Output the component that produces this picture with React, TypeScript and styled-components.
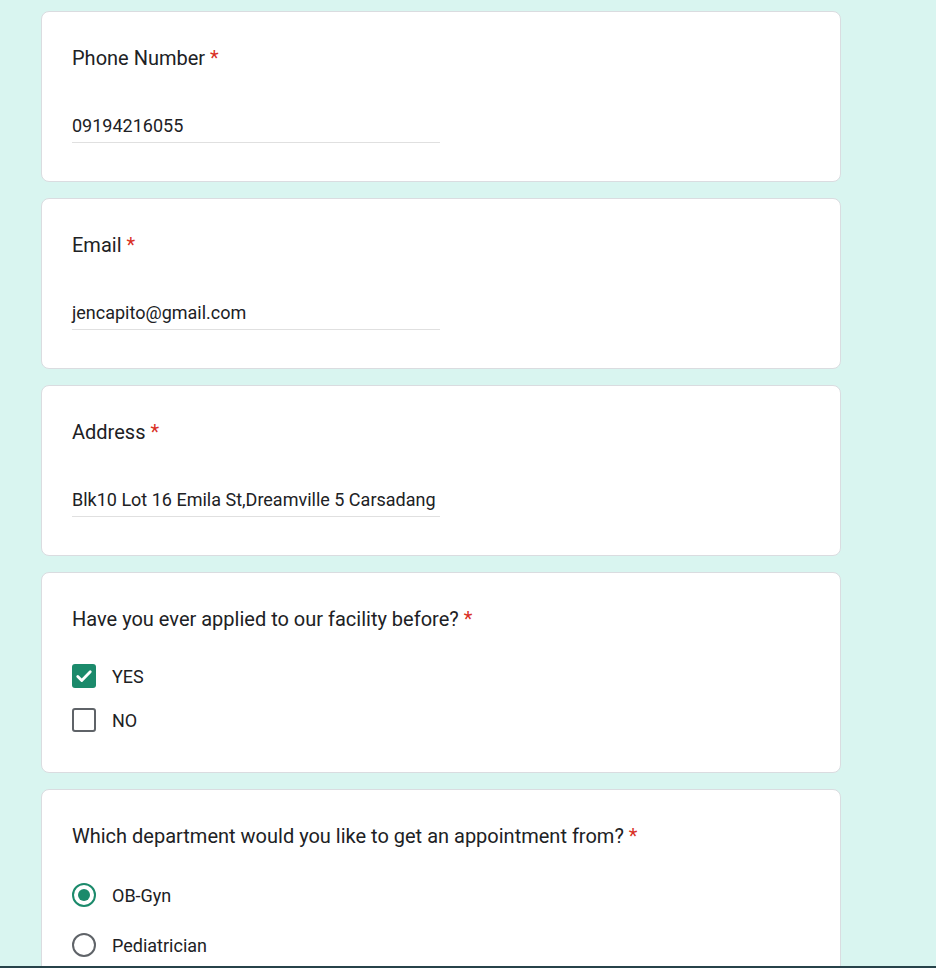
import React from "react"
import styled, { createGlobalStyle } from "styled-components"

const GlobalStyle = createGlobalStyle`
  html, body {
    margin: 0;
    padding: 0;
    background: #d9f5f0;
  }
  body {
    font-family: Roboto, "Liberation Sans", Arial, sans-serif;
    color: #202124;
  }
`

const ACCENT = "#1b8a6b"

const Screen = styled.div`
  height: 968px;
  display: grid;
  grid-template-rows: 1fr 2px;
  overflow: hidden;
`

const Column = styled.div`
  display: flex;
  flex-direction: column;
  gap: 16px;
  width: 800px;
  padding: 11px 0 0 41px;
  overflow: hidden;
`

const Card = styled.section`
  flex-shrink: 0;
  background: #fff;
  border: 1px solid #dadce0;
  border-radius: 8px;
  padding: 34px 30px 30px;
`

const Label = styled.div`
  font-size: 20px;
  line-height: 24px;
  letter-spacing: 0;
`

const Required = styled.span`
  color: #d93025;
  margin-left: 5px;
`

const Value = styled.div`
  width: 368px;
  margin-top: 44px;
  margin-bottom: 8px;
  padding-bottom: 4px;
  border-bottom: 1px solid #e0e0e0;
  font-size: 18px;
  line-height: 24px;
  white-space: nowrap;
`

const Options = styled.div<{ $gap: number }>`
  margin-top: ${(p) => p.$gap}px;
  display: flex;
  flex-direction: column;
`

const Option = styled.div<{ $h: number }>`
  height: ${(p) => p.$h}px;
  display: flex;
  align-items: center;
  gap: 16px;
  font-size: 18px;
`

const Box = styled.span<{ $checked?: boolean }>`
  width: 24px;
  height: 24px;
  box-sizing: border-box;
  border-radius: 3px;
  display: inline-flex;
  align-items: center;
  justify-content: center;
  background: ${(p) => (p.$checked ? ACCENT : "#fff")};
  border: ${(p) => (p.$checked ? "none" : "2px solid #5f6368")};
`

const Radio = styled.span<{ $checked?: boolean }>`
  width: 24px;
  height: 24px;
  box-sizing: border-box;
  border-radius: 50%;
  border: 2px solid ${(p) => (p.$checked ? ACCENT : "#5f6368")};
  display: inline-flex;
  align-items: center;
  justify-content: center;
  &::after {
    content: "";
    width: 12px;
    height: 12px;
    border-radius: 50%;
    background: ${(p) => (p.$checked ? ACCENT : "transparent")};
  }
`

const Taskbar = styled.div`
  background: #27434a;
`

const Check = () => (
  <svg width="20" height="20" viewBox="0 0 24 24">
    <path d="M4.5 12.5l4.8 4.8L19.5 7" fill="none" stroke="#fff" strokeWidth="3.4" strokeLinecap="round" strokeLinejoin="round" />
  </svg>
)

const TextQuestion = ({ label, value }: { label: string; value: string }) => (
  <Card>
    <Label>
      {label}
      <Required>*</Required>
    </Label>
    <Value>{value}</Value>
  </Card>
)

export default function App() {
  return (
    <>
      <GlobalStyle />
      <Screen>
        <Column>
          <TextQuestion label="Phone Number" value="09194216055" />
          <TextQuestion label="Email" value="jencapito@gmail.com" />
          <TextQuestion label="Address" value="Blk10 Lot 16 Emila St,Dreamville 5 Carsadang" />
          <Card>
            <Label>
              Have you ever applied to our facility before?
              <Required>*</Required>
            </Label>
            <Options $gap={23}>
              <Option $h={44}>
                <Box $checked>
                  <Check />
                </Box>
                YES
              </Option>
              <Option $h={44}>
                <Box />
                NO
              </Option>
            </Options>
          </Card>
          <Card>
            <Label>
              Which department would you like to get an appointment from?
              <Required>*</Required>
            </Label>
            <Options $gap={22}>
              <Option $h={50}>
                <Radio $checked />
                OB-Gyn
              </Option>
              <Option $h={50}>
                <Radio />
                Pediatrician
              </Option>
            </Options>
          </Card>
        </Column>
        <Taskbar />
      </Screen>
    </>
  )
}
